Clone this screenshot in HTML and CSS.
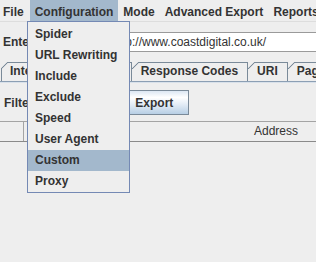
FILE: index.html
```html
<!DOCTYPE html>
<html>
<head>
<meta charset="utf-8">
<link rel="stylesheet" href="styles.css">
</head>
<body>
<div class="app">
  <nav class="menubar">
    <span class="menu menu--first">File</span>
    <span class="menu menu--open">Configuration</span>
    <span class="menu">Mode</span>
    <span class="menu">Advanced Export</span>
    <span class="menu">Reports</span>
  </nav>
  <div class="url-row">
    <span class="url-label">Enter URL to spider:</span>
    <div class="url-field">http://www.coastdigital.co.uk/</div>
  </div>
  <div class="tabs">
    <span class="tab tab--first">Internal</span>
    <span class="tab tab--wide">External</span>
    <span class="tab">Response Codes</span>
    <span class="tab">URI</span>
    <span class="tab">Page Titles</span>
  </div>
  <div class="filter-row">
    <span class="filter-label">Filter:</span>
    <div class="combo">All</div>
    <button class="btn">Export</button>
  </div>
  <div class="table-header">
    <div class="th th--index"></div>
    <div class="th th--address">Address</div>
  </div>
  <ul class="popup">
    <li class="popup-item">Spider</li>
    <li class="popup-item">URL Rewriting</li>
    <li class="popup-item">Include</li>
    <li class="popup-item">Exclude</li>
    <li class="popup-item">Speed</li>
    <li class="popup-item">User Agent</li>
    <li class="popup-item popup-item--active">Custom</li>
    <li class="popup-item">Proxy</li>
  </ul>
</div>
</body>
</html>
```
FILE: styles.css
```css
html, body {
  margin: 0;
  padding: 0;
  background: #eeeeee;
  overflow: hidden;
}
body {
  width: 316px;
  height: 262px;
  font: bold 12px "Liberation Sans", Arial, sans-serif;
  color: #333333;
}
.app {
  position: relative;
  width: 316px;
  height: 262px;
  overflow: hidden;
}

/* menu bar */
.menubar {
  display: flex;
  height: 21px;
  border-bottom: 1px solid #dddddd;
  white-space: nowrap;
}
.menu {
  padding: 3px 5px 0;
  line-height: 18px;
}
.menu--first {
  margin-left: -2px;
  padding-right: 6px;
}
.menu--open {
  background: #a3b8cc;
}

/* url row */
.url-row {
  display: flex;
  align-items: center;
  padding: 10px 0 10px 3px;
  white-space: nowrap;
}
.url-label {
  flex: 0 0 105px;
  overflow: hidden;
}
.url-field {
  flex: 0 0 260px;
  height: 18px;
  line-height: 18px;
  padding: 0 3px;
  background: #ffffff;
  border: 1px solid #9a9a9a;
  font-weight: normal;
  overflow: hidden;
}

/* tabs */
.tabs {
  display: flex;
  height: 19px;
  padding-left: 1px;
  border-bottom: 1px solid #8c9fb4;
  box-shadow: 0 1px 0 #d9e1ea;
  white-space: nowrap;
}
.tab {
  height: 19px;
  line-height: 19px;
  padding: 0 9px;
  border-right: 1px solid #7a8a99;
  background:
    linear-gradient(#7a8a99, #7a8a99) 6px 0 / 100% 1px no-repeat,
    linear-gradient(to bottom right, transparent calc(50% - 0.8px), #7a8a99 calc(50% - 0.3px), #7a8a99 calc(50% + 0.3px), transparent calc(50% + 0.8px)) 0 0 / 7px 7px no-repeat,
    #eeeeee;
}
.tab--first {
  background:
    linear-gradient(#7a8a99, #7a8a99) 6px 0 / 100% 1px no-repeat,
    linear-gradient(#7a8a99, #7a8a99) 0 6px / 1px 100% no-repeat,
    linear-gradient(to bottom right, transparent calc(50% - 0.8px), #7a8a99 calc(50% - 0.3px), #7a8a99 calc(50% + 0.3px), transparent calc(50% + 0.8px)) 0 0 / 7px 7px no-repeat,
    #eeeeee;
}
.tab--wide {
  padding-right: 11px;
}

/* filter row */
.filter-row {
  display: flex;
  align-items: center;
  gap: 5px;
  padding: 8px 0 0 4px;
  height: 25px;
}
.combo {
  box-sizing: border-box;
  width: 72px;
  height: 22px;
  line-height: 20px;
  padding-left: 4px;
  border: 1px solid #7a8a99;
  background: #ffffff;
}
.btn {
  box-sizing: border-box;
  width: 70px;
  height: 25px;
  padding: 0;
  border: 1px solid #7a8a99;
  font: bold 12px "Liberation Sans", Arial, sans-serif;
  color: #333333;
  background: linear-gradient(to bottom, #dce7f3 0%, #ffffff 28%, #e6eef7 55%, #b8cfe5 100%);
}

/* table header */
.table-header {
  display: flex;
  margin-top: 6px;
  height: 19px;
  line-height: 19px;
  border-top: 1px solid #a4a4a4;
  border-bottom: 1px solid #8a8a8a;
  white-space: nowrap;
}
.th--index {
  flex: 0 0 23px;
  border-right: 1px solid #a4a4a4;
}
.th--address {
  flex: 0 0 504px;
  text-align: center;
  font-weight: normal;
}

/* popup menu */
.popup {
  position: absolute;
  top: 21px;
  left: 27px;
  width: 101px;
  margin: 0;
  padding: 2px 0 0;
  list-style: none;
  background: #eeeeee;
  border: 1px solid #7489b4;
}
.popup-item {
  height: 21px;
  line-height: 21px;
  padding-left: 7px;
  white-space: nowrap;
}
.popup-item--active {
  background: #a3b8cc;
}
```
